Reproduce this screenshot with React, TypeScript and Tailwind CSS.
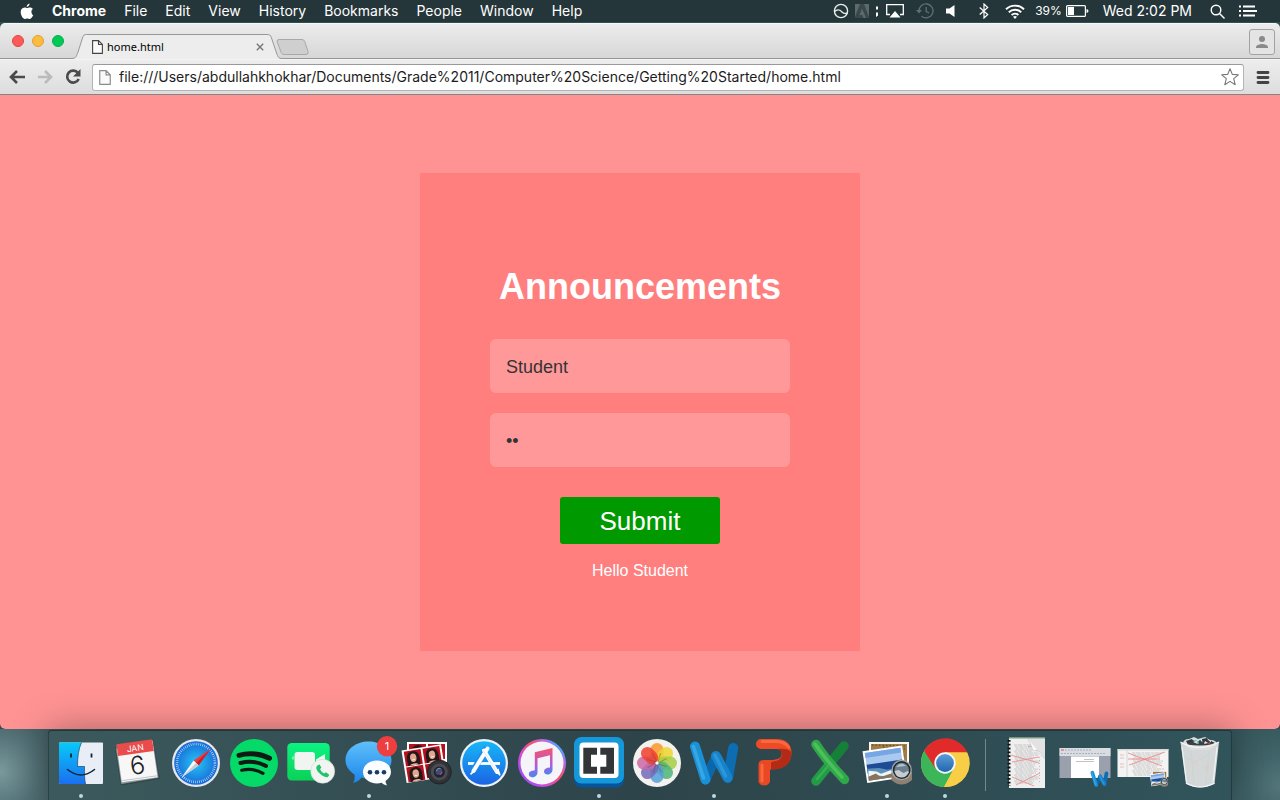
import React from "react";

const MENU_ITEMS = ["File", "Edit", "View", "History", "Bookmarks", "People", "Window", "Help"];

/* ---------- Menu bar ---------- */

function AppleLogo() {
  return (
    <svg viewBox="0 0 14 17" className="h-[17px] w-[14px]" fill="#fff">
      <path d="M9.6 0.6C9.7 2.3 8.3 4 6.7 4 6.5 2.4 8 0.8 9.6 0.6ZM11.4 8.7C11.4 7 12.6 6.2 12.9 6 12 4.700 10.700 4.400 10.100 4.400 8.900 4.300 7.800 5.100 7.200 5.100 6.600 5.100 5.700 4.400 4.600 4.400 2.300 4.500.700 6.300.700 9 .7 12.200 3 16 4.800 16 5.700 16 6.100 15.400 7.200 15.400 8.300 15.400 8.600 16 9.600 16 11.300 16 12.900 13.200 13.200 12.100 12.900 12 11.400 11.200 11.400 8.700Z" />
    </svg>
  );
}

function StatusIcons() {
  return (
    <>
      <svg viewBox="0 0 16 16" className="h-4 w-4" fill="none" stroke="#e9eeee" strokeWidth="1.4">
        <circle cx="8" cy="8" r="6.600" />
        <path d="M1.500 8.500C5 5.500 7 7 9 9s4 1.500 5.500.8" />
      </svg>
      <svg viewBox="0 0 14 14" className="ml-1.5 h-3.5 w-3.5">
        <path d="M0 0h5L0 13zM14 0H9l5 13zM7 4.500l4 9.500H8.500L7.300 11H4.500z" fill="#5c6a6d" />
        <path d="M0 0h14v14H0z" fill="#5c6a6d" opacity=".35" />
      </svg>
      <svg viewBox="0 0 3 12" className="ml-1.5 h-3 w-[3px]" fill="#fff">
        <path d="M1 1.500h2v3H1zM1 7.500h2v3L1 12z" />
      </svg>
      <svg viewBox="0 0 18 14" className="ml-2 h-3.5 w-[18px]">
        <path d="M4 10.500H.7V.7h16.600v9.800H14" fill="none" stroke="#fff" strokeWidth="1.3" />
        <path d="M9 7l5.500 6.500h-11z" fill="#fff" />
      </svg>
      <svg viewBox="0 0 18 16" className="ml-3 h-4 w-[18px]" fill="none" stroke="#5f7073" strokeWidth="1.300">
        <path d="M3 8a7 7 0 1 1 2.500 5.200M10.200 4v4.500l3 1.500" />
        <path d="M0 7h6L3 10.500z" fill="#5f7073" stroke="none" />
      </svg>
      <svg viewBox="0 0 9 12" className="ml-3 h-3 w-[9px]" fill="#fff">
        <path d="M0 3.500h3.500L8.500 0v12L3.500 8.500H0z" />
      </svg>
      <svg viewBox="0 0 10 16" className="ml-6 h-4 w-2.5" fill="none" stroke="#fff" strokeWidth="1.200">
        <path d="M.7 4.500l8 7L5 15V1l3.700 3.500-8 7" />
      </svg>
      <svg viewBox="0 0 20 15" className="ml-4 h-[15px] w-5" fill="none" stroke="#fff" strokeWidth="1.900">
        <path d="M1 5.200a13 13 0 0 1 18 0M3.800 8.200a9 9 0 0 1 12.400 0M6.600 11a5 5 0 0 1 6.800 0" />
        <path d="M10 15l-2-2.200a3 3 0 0 1 4 0z" fill="#fff" stroke="none" />
      </svg>
      <span className="ml-2.5 text-[12px] leading-4">39%</span>
      <svg viewBox="0 0 23 12" className="ml-1 h-3 w-[23px]">
        <rect x=".6" y=".6" width="18.800" height="10.800" rx="1" fill="none" stroke="#fff" strokeWidth="1.200" />
        <path d="M2 2h6v8H2z" fill="#fff" />
        <path d="M20.500 4q2 .3 2 2t-2 2z" fill="#fff" />
      </svg>
      <span className="ml-3.5 text-[14px] leading-4">Wed 2:02 PM</span>
      <svg viewBox="0 0 15 15" className="ml-[18px] h-[15px] w-[15px]" fill="none" stroke="#fff" strokeWidth="1.400">
        <circle cx="6" cy="6" r="4.800" />
        <path d="M9.500 9.500l5 5" />
      </svg>
      <svg viewBox="0 0 18 12" className="ml-3.5 h-3 w-[18px]" fill="#fff">
        <path d="M0 .5h2v2H0zM0 5h2v2H0zM0 9.500h2v2H0zM4 .5h12v2H4zM4 5h14v2H4zM4 9.500h12v2H4z" />
      </svg>
    </>
  );
}

function MenuBar() {
  return (
    <header className="flex h-[23px] items-center justify-between border-b border-[#2f5153] bg-[#25363a] pr-[23px] pl-5 text-[14px] leading-4 text-white">
      <nav className="flex items-center gap-[18px]">
        <a href="#apple" aria-label="Apple" className="block">
          <AppleLogo />
        </a>
        <a href="#chrome" className="font-bold">Chrome</a>
        {MENU_ITEMS.map((item) => (
          <a key={item} href={"#" + item.toLowerCase()}>{item}</a>
        ))}
      </nav>
      <div className="flex items-center">
        <StatusIcons />
      </div>
    </header>
  );
}

/* ---------- Browser ---------- */

function PageIcon({ stroke, className }: { stroke: string; className: string }) {
  return (
    <svg viewBox="0 0 11 14" className={className} fill="#fafafa" stroke={stroke} strokeWidth="1.100">
      <path d="M.6.6h5.900l3.900 3.900v8.900H.6zM6.500.6v3.900h3.900" />
    </svg>
  );
}

function TabStrip() {
  return (
    <div className="flex h-9 items-end border-t border-b border-t-[#f7f7f7] border-b-[#979797] bg-linear-to-b from-[#ececec] to-[#d7d7d7]">
      <div className="flex gap-2 self-center pl-3">
        <button aria-label="Close window" className="h-3 w-3 rounded-full border border-[#e2463f] bg-[#fc5b57]" />
        <button aria-label="Minimize window" className="h-3 w-3 rounded-full border border-[#e0a032] bg-[#fdbc40]" />
        <button aria-label="Zoom window" className="h-3 w-3 rounded-full border border-[#05b048] bg-[#00ca56]" />
      </div>
      <div className="relative -mb-px ml-2 flex h-[25px] w-[210px] items-center pr-[18px] pl-5">
        <svg viewBox="0 0 210 25" className="absolute inset-0 h-full w-full">
          <path d="M0 25V24.500C4 24.500 4.500 22 6 18L10.500 4C11.500 1 12 .5 14.500 .5H195C197.500 .5 198.500 1 199.500 4L204.500 19C206 23 206.500 24.500 210 24.500V25Z" fill="#ededed" />
          <path d="M0 24.500C4 24.500 4.500 22 6 18L10.500 4C11.500 1 12 .5 14.500 .5H195C197.500 .5 198.500 1 199.500 4L204.500 19C206 23 206.500 24.500 210 24.500" fill="none" stroke="#979797" />
        </svg>
        <PageIcon stroke="#444" className="relative h-3.5 w-[11px]" />
        <span className="relative ml-1 flex-1 font-['Noto_Sans',sans-serif] text-[11px] leading-4 text-black">home.html</span>
        <button aria-label="Close tab" className="relative">
          <svg viewBox="0 0 8 8" className="h-2 w-2" stroke="#777" strokeWidth="1.400">
            <path d="M.8.8l6.400 6.400M7.200.8L.8 7.200" />
          </svg>
        </button>
      </div>
      <button aria-label="New tab" className="mb-[3px] -ml-1.5">
        <svg viewBox="0 0 33 16" className="h-4 w-[33px]" fill="#cfcfcf" stroke="#a8a8a8">
          <path d="M3 .5H26Q28 .5 28.700 2.500L32 12.500Q33 15.500 30 15.500H8Q6 15.500 5.200 13.500L1.200 3Q.5.500 3 .5Z" />
        </svg>
      </button>
      <button aria-label="Profile" className="mr-[5px] ml-auto mb-[3px] flex h-[26px] w-[26px] items-center justify-center rounded-[3px] border border-[#a2a2a2] bg-[#e4e4e4]">
        <svg viewBox="0 0 12 12" className="h-3 w-3" fill="#8a8a8a">
          <circle cx="6" cy="3" r="3" />
          <path d="M0 12V10.500C1.500 7 10.500 7 12 10.500V12Z" />
        </svg>
      </button>
    </div>
  );
}

function Toolbar() {
  return (
    <div className="flex h-9 items-center border-t border-b border-t-[#f4f4f4] border-b-[#858585] bg-linear-to-b from-[#ededed] to-[#dddddd] pr-[10px] pl-[9px]">
      <button aria-label="Back">
        <svg viewBox="0 0 16 14" className="h-3.5 w-4" fill="none" stroke="#4a4a4a" strokeWidth="2.600">
          <path d="M8 1L2 7l6 6M2 7h14" />
        </svg>
      </button>
      <button aria-label="Forward" className="ml-3">
        <svg viewBox="0 0 16 14" className="h-3.5 w-4" fill="none" stroke="#bababa" strokeWidth="2.600">
          <path d="M8 1l6 6-6 6M14 7H1" />
        </svg>
      </button>
      <button aria-label="Reload" className="ml-3">
        <svg viewBox="0 0 16 16" className="h-4 w-4">
          <path d="M13 4A6 6 0 1 0 13.700 10" fill="none" stroke="#4a4a4a" strokeWidth="2.600" />
          <path d="M15.500 0v7.500H8z" fill="#4a4a4a" />
        </svg>
      </button>
      <div className="ml-[11px] flex h-[27px] flex-1 items-center rounded-[3px] border border-[#b5b5b5] border-t-[#999] bg-white pr-1 pl-1.5">
        <PageIcon stroke="#8c8c8c" className="h-[15px] w-3" />
        <input
          aria-label="Address"
          defaultValue="file:///Users/abdullahkhokhar/Documents/Grade%2011/Computer%20Science/Getting%20Started/home.html"
          className="ml-2 min-w-0 flex-1 bg-transparent text-[14px] leading-5 text-[#1c1c1c] outline-none"
        />
        <button aria-label="Bookmark this page">
          <svg viewBox="0 0 18 18" className="h-[18px] w-[18px]" fill="#fff" stroke="#777" strokeWidth="1.100" strokeLinejoin="round">
            <path d="M9 .8l2.300 5.600 6 .4-4.600 3.900 1.500 6L9 13.400l-5.200 3.300 1.500-6L.7 6.800l6-.4z" />
          </svg>
        </button>
      </div>
      <button aria-label="Menu" className="ml-3">
        <svg viewBox="0 0 14 13" className="h-[13px] w-3.5" stroke="#444" strokeWidth="2.800" strokeLinecap="round">
          <path d="M2 1.500h10M2 6.500h10M2 11.500h10" />
        </svg>
      </button>
    </div>
  );
}

function LoginPage() {
  const field =
    "block h-[54px] w-full rounded-md bg-[#ff9999] px-4 pt-0.5 text-[18px] text-[#333] outline-none";
  return (
    <main className="flex flex-1 items-center justify-center rounded-b-[5px] bg-[#ff9393] font-['Liberation_Sans',Arial,sans-serif]">
      <form
        onSubmit={(e) => e.preventDefault()}
        className="flex w-[440px] max-w-full flex-col items-center bg-[#ff7f7f] px-[70px] pt-[92px] pb-[70px] text-white"
      >
        <h1 className="text-[36px] leading-[44px] font-bold">Announcements</h1>
        <div className="mt-[30px] flex w-full flex-col gap-5">
          <input aria-label="Username" type="text" defaultValue="Student" className={field} />
          <input aria-label="Password" type="password" defaultValue="hi" className={field} />
        </div>
        <button type="submit" className="mt-[30px] h-[47px] w-40 rounded-[3px] bg-[#009900] text-[26px] leading-8">
          Submit
        </button>
        <p className="mt-[17px] text-[16px] leading-5">Hello Student</p>
      </form>
    </main>
  );
}

/* ---------- Dock icons, each drawn on a 56 x 56 grid ---------- */

function Finder() {
  return (
    <>
      <rect x="6" y="7.500" width="44" height="41.500" rx="1" fill="#e9eef6" />
      <path d="M28.500 7.500H7a1 1 0 0 0-1 1V48a1 1 0 0 0 1 1h25.500c-1-5-1.200-10-1-17.500H24.500C24.500 22 25.500 14 28.500 7.500Z" fill="url(#finder)" />
      <path d="M28.500 7.500C25.500 14 24.500 22 24.500 31.500h7c-.2 7.500 0 12.500 1 17.500" fill="none" stroke="#17466f" strokeWidth=".7" />
      <path d="M18 18.500v4M38.500 18.500v4" stroke="#10243a" strokeWidth="1.800" />
      <path d="M14.500 34.500Q28 45.500 41.500 34.500" fill="none" stroke="#10243a" strokeWidth="1.600" strokeLinecap="round" />
    </>
  );
}

function Calendar() {
  return (
    <>
      <path d="M5 12.500L42 4L50 44L11 50.500Z" fill="#39474a" />
      <path d="M5.500 13L43 5L49 43L11 49.500Z" fill="#8c9da1" stroke="#26383b" strokeWidth=".6" />
      <g transform="rotate(-8 27 26)">
        <rect x="9" y="8" width="36" height="37" fill="#f7f7f7" />
        <rect x="9" y="6.500" width="36" height="12" fill="#ea4c4b" />
        <path d="M9 43.500h36" stroke="#c5c5c5" />
        <text x="27" y="16" textAnchor="middle" fontSize="8.500" fill="#fff">JAN</text>
        <text x="27" y="39" textAnchor="middle" fontSize="25" fontWeight="300" fill="#222">6</text>
      </g>
    </>
  );
}

function Safari() {
  return (
    <>
      <circle cx="28" cy="28" r="24" fill="#e6e9ec" />
      <circle cx="28" cy="28" r="21.800" fill="url(#safari)" />
      <circle cx="28" cy="28" r="19" fill="none" stroke="#d5ecfb" strokeWidth="2.600" strokeDasharray=".6 1.390" />
      <path d="M42.500 14L30.600 30.500L25.600 25.500Z" fill="#f5383b" />
      <path d="M42.500 14L30.600 30.500L28 28Z" fill="#c91f2a" />
      <path d="M13.500 42.500L25.600 25.500L30.600 30.500Z" fill="#fafafa" />
      <path d="M13.500 42.500L28 28L30.600 30.500Z" fill="#c6ccd1" />
    </>
  );
}

function Spotify() {
  return (
    <>
      <circle cx="28" cy="28" r="24" fill="#05d968" />
      <g fill="none" stroke="#0d1b14" strokeLinecap="round">
        <path d="M13 20.300C23 17.500 35 18.500 43.500 23.300" strokeWidth="5" />
        <path d="M14.500 28C23 25.800 32.500 27 40 31" strokeWidth="4" />
        <path d="M15.700 35.200C22 33.800 30.500 34.500 37 38.300" strokeWidth="3.200" />
      </g>
    </>
  );
}

function FaceTime() {
  return (
    <>
      <rect x="4.300" y="8" width="42.400" height="37.500" rx="4.500" fill="url(#green)" />
      <rect x="11.500" y="17" width="20.500" height="18" rx="3" fill="#f1f5f2" />
      <path d="M33 24.500l9-5.500v12l-9-3z" fill="#f1f5f2" />
      <path d="M10 21.500v3" stroke="#f1f5f2" />
      <circle cx="39.700" cy="36.300" r="12" fill="#f2f4f2" stroke="#c9d3cc" strokeWidth=".5" />
      <path d="M34.500 30.500c-2 1.200-1.400 4.200 1.500 7.300s6.800 5.200 8.800 4.200l1.600-2-3.400-2.800-2 1.200c-2-1-3.400-2.500-3.900-4.300l1.300-1.600-2.100-3.300z" fill="#1ec36a" />
    </>
  );
}

function Messages() {
  return (
    <>
      <path d="M27.500 6.500C40 6.500 50.500 14.500 50.500 25S40 43.500 27.500 43.500c-2.500 0-5-.3-7-1-2.500 3.500-5 4.800-8.500 5.500 1.500-2.500 2-5 1.500-8.500C8 36 4.500 31 4.500 25 4.500 14.500 15 6.500 27.500 6.500Z" fill="url(#blue)" />
      <path d="M36 25.500c8 0 14 5 14 11.500 0 4-2.500 7-5.500 9 .2 1.800.7 3 1.700 4.500-2.500-.3-4.200-1.300-5.500-2.700-1.500.5-3 .6-4.700.6-8 0-14-5-14-11.400S28 25.500 36 25.500Z" fill="#fbfdff" />
      <g fill="#153c6c">
        <circle cx="29" cy="37.300" r="2.300" /><circle cx="36" cy="37.300" r="2.300" /><circle cx="43" cy="37.300" r="2.300" />
      </g>
      <circle cx="46" cy="11.300" r="10.200" fill="#ee3e40" />
      <text x="46" y="15.300" textAnchor="middle" fontSize="11" fill="#fff">1</text>
    </>
  );
}

function Portrait({ x, y }: { x: number; y: number }) {
  return (
    <g transform={`translate(${x} ${y})`}>
      <path d="M0 0h17v15H0z" fill="#b5121f" />
      <path d="M2.500 15C1 5 3 1 8.500 1S16 5 14.500 15Z" fill="#241619" />
      <ellipse cx="8.500" cy="7.500" rx="3.200" ry="4.200" fill="#e0a88c" />
      <path d="M4 15c1-2.500 8-2.500 9 0z" fill="#e7b39b" />
      <path d="M7 9.500h3" stroke="#fff" strokeWidth=".8" />
    </g>
  );
}

function PhotoBooth() {
  return (
    <>
      <path d="M9 7h40v20H9z" fill="#fff" />
      <path d="M11 9h17v15H11zM30 9h17v15H30z" fill="#b5121f" />
      <path d="M14 13q6-6 12 0zM33 14q6-6 12 0z" fill="#241619" />
      <g transform="translate(3.500 15.500) rotate(-9)">
        <path d="M0 0h40v33H0z" fill="#fff" />
        <Portrait x={2} y={1.500} />
        <Portrait x={21} y={1.500} />
        <Portrait x={2} y={17.500} />
        <path d="M21 17.500h17v14H21z" fill="#b5121f" />
      </g>
      <circle cx="41.300" cy="37" r="12" fill="#303235" stroke="#17191b" strokeWidth=".7" />
      <circle cx="41.300" cy="37" r="8.500" fill="#4a4c50" />
      <circle cx="41.300" cy="37" r="5.500" fill="#1b2430" />
      <circle cx="41" cy="36.500" r="3.500" fill="#4b4673" />
      <path d="M38.500 36a3 3 0 0 1 4-2.500" stroke="#58b3a4" fill="none" />
      <path d="M42 39.500a3 3 0 0 0 2-2.500" stroke="#cf4b85" fill="none" />
    </>
  );
}

function AppStore() {
  return (
    <>
      <circle cx="28" cy="28" r="24" fill="#eef2f5" />
      <circle cx="28" cy="28" r="21.800" fill="url(#store)" />
      <path d="M12 28.500h32" stroke="#fff" strokeWidth="2.800" />
      <path d="M30.500 12.500L17 36" stroke="#1b8fe9" strokeWidth="6" />
      <g stroke="#fff" strokeWidth="4" strokeLinecap="round">
        <path d="M31.500 13.500L17.500 36" />
        <path d="M28 15.500L41 37" />
      </g>
      <path d="M14 38.500l4-3.500 1.500 1L15 40zM38.500 36l4-2.500 2 6-.5 1.500z" fill="#fff" />
      <path d="M27 15l13 21" stroke="#bcdcf7" strokeWidth=".6" />
    </>
  );
}

function ITunes() {
  return (
    <>
      <circle cx="28" cy="28" r="24" fill="url(#tunesRing)" />
      <circle cx="28" cy="28" r="21.500" fill="#f5f4f8" />
      <path d="M20.800 17.300L38.500 13v21.500c0 6-8.500 6.500-8.500 2 0-2.500 2.200-3.800 6-4V20.300l-12.500 2.900v14c0 6-8.700 6.600-8.700 2 0-2.500 2-3.700 6-4z" fill="url(#tunesNote)" />
    </>
  );
}

function Brackets() {
  return (
    <>
      <rect x="3" y="5" width="50" height="47.500" rx="7.500" fill="#06549a" />
      <rect x="3" y="2" width="50" height="46.500" rx="7.500" fill="#1598d9" />
      <rect x="8.500" y="7.500" width="39" height="35.500" rx="4" fill="#fff" />
      <path d="M12.300 12.700h13.700v7h-6v12h6v7H12.300zM43 12.700H29.300v7h6v12h-6v7H43z" fill="#333638" />
    </>
  );
}

const PETALS = ["#f9982a", "#ecd62f", "#a3cf45", "#4cb679", "#549fd8", "#7569b9", "#cb69a6", "#ee402f"];

function Photos() {
  return (
    <>
      <circle cx="28" cy="28" r="24" fill="#f4f2ef" />
      {PETALS.map((color, i) => (
        <rect key={color} x="21.500" y="8" width="13" height="19" rx="6.500" fill={color} opacity=".85" transform={`rotate(${i * 45} 28 28)`} />
      ))}
      <g stroke="#7a3b4c" strokeWidth="1.200" opacity=".4">
        {PETALS.map((color, i) => (
          <path key={color} d="M28 26.500l-4.500-8" transform={`rotate(${i * 45} 28 28)`} />
        ))}
      </g>
      <circle cx="28" cy="28" r="1.600" fill="#fff" />
    </>
  );
}

function WordMark() {
  return (
    <g fill="none" strokeLinecap="round" strokeLinejoin="round" strokeWidth="10">
      <path d="M47.200 13L42 43" stroke="#0d6db3" />
      <path d="M19.500 44.500L30 22" stroke="#0b66aa" />
      <path d="M30 21L41.500 42.500" stroke="#1683cb" />
      <path d="M9 11.500L19.500 44.500" stroke="#1a90d6" />
      <path d="M7.500 11.500L17.500 43" stroke="#36a6e4" strokeWidth="3.500" />
      <path d="M29 20L39.500 41" stroke="#2b97da" strokeWidth="3.500" />
    </g>
  );
}

function PowerPoint() {
  return (
    <>
      <path d="M17 4H32C43 4 47.500 10 47.500 17.500C47.500 27 42 34.500 26 34.500V25C35 25 37.500 23 37.500 18C37.500 15 35.500 14 32 14H17A5 5 0 0 1 17 4Z" fill="#ee4a27" />
      <path d="M47.500 17C47.500 28 42 34.500 27 34.500V27C35 26 38.500 24 37.500 18C37 15.500 35 14 33 14C40 13 45 14 47.500 17Z" fill="#b32a16" />
      <path d="M18 6.500H32C38 6.500 42 8.500 44.500 12" stroke="#f9693f" strokeWidth="3" fill="none" strokeLinecap="round" />
      <path d="M19.500 25H30Q26 27 26 32V46.500A6 5.500 0 0 1 14.500 46.500V30Q14.500 25 19.500 25Z" fill="#ea4724" />
      <path d="M18 30V46" stroke="#f9693f" strokeWidth="3" strokeLinecap="round" />
    </>
  );
}

function Excel() {
  return (
    <g fill="none" strokeLinecap="round">
      <path d="M42 11L29 27" stroke="#168039" strokeWidth="9.500" />
      <path d="M27 30L14 46" stroke="#219b45" strokeWidth="9.500" />
      <path d="M14 9.500Q24 25 42.500 44.500" stroke="#2fa848" strokeWidth="9.500" />
      <path d="M13 9Q24 25 40 42" stroke="#4dbf5d" strokeWidth="3.500" />
      <path d="M26 31L15 44" stroke="#37b04f" strokeWidth="2.500" />
    </g>
  );
}

function PreviewArt() {
  return (
    <>
      <path d="M10 7h40v30H10z" fill="#fbf8ef" />
      <path d="M12 9h36v26H12z" fill="#a17c47" />
      <path d="M13 10l33 1M24 12l22 2M34 18l12 3" stroke="#5e4524" strokeDasharray="1.500 2" />
      <g transform="translate(3.500 16.300) rotate(-8.500)">
        <path d="M0 0h40v32H0z" fill="#fff" />
        <path d="M2 2h36v28H2z" fill="#a9c9ef" />
        <path d="M2 2h36v5H2z" fill="#77a6e4" />
        <path d="M2 14h36v9H2z" fill="#1e4b93" />
        <path d="M2 18l12 1 8 3 16-1v9H2z" fill="#5d91ba" />
        <path d="M3 20l8 2 4 3 10-2 3 4-9 1-8-2-9 2z" fill="#eef5f8" />
        <path d="M2 26l8-2 4 4 12-2 12 1v3H2z" fill="#8a7358" />
      </g>
      <path d="M32.500 37v8q10 9 20.500 0v-8z" fill="#8e8173" />
      <circle cx="42.700" cy="35" r="10.200" fill="#a9a8a2" />
      <circle cx="42.700" cy="35" r="8.900" fill="#1f2b32" />
      <circle cx="42.700" cy="35" r="7.300" fill="#6c7f8c" />
      <path d="M35.500 36l4-1 5 3 4-2 1.500 1q-3 6-8 5.500-5 0-6.500-6.500z" fill="#c6cccf" />
      <path d="M37 32q5-6 10-1z" fill="#aec4d3" />
    </>
  );
}

function Chrome() {
  return (
    <>
      <circle cx="28" cy="28" r="24" fill="#f8ce46" />
      <path d="M28 28L7.200 16A24 24 0 0 0 27 52L38 33.500Z" fill="#3db65a" />
      <path d="M7.200 16A24 24 0 0 1 50.300 17.500H28L18.500 33.500Z" fill="#e12b2b" />
      <path d="M50.300 17.500H28L37 33L27 52A24 24 0 0 0 50.300 17.500Z" fill="#f8ce46" />
      <circle cx="28" cy="28" r="10.700" fill="#f5f7f8" />
      <circle cx="28" cy="28" r="8.900" fill="url(#chromeDot)" />
    </>
  );
}

function TextLines({ x, y, width, rows }: { x: number; y: number; width: number; rows: number }) {
  return (
    <g stroke="#b4b4b4" strokeWidth=".7" strokeDasharray="3 .6 5 .8">
      {Array.from({ length: rows }, (_, i) => (
        <path key={i} d={`M${x + (i % 3)} ${y + i * 2}h${width - (i % 4) * 2}`} />
      ))}
    </g>
  );
}

function NotebookDoc() {
  return (
    <>
      <path d="M11 2h36v51H11z" fill="#efefef" />
      <path d="M11 2.700h36" stroke="#75937d" strokeWidth="1.400" />
      <TextLines x={16} y={10} width={24} rows={20} />
      <path d="M41.500 10v38" stroke="#aaa" strokeWidth=".7" strokeDasharray="1 2" />
      <path d="M13 20l28 8M14 27l27-5M14 42l22 9M18 50l24-12M30 12l12-4" stroke="#ee8585" strokeWidth=".8" />
      <path d="M30 4q4 12 17 20V4z" fill="#e2e2e2" />
      <path d="M30 4q4 7 5 12 6-4 12 8" fill="#fafafa" stroke="#bdbdbd" strokeWidth=".5" />
      <path d="M11 5v46" stroke="#111" strokeWidth="3" strokeDasharray="1.800 2" />
    </>
  );
}

function WordWindow() {
  return (
    <>
      <path d="M3.500 13h51v30h-51z" fill="#9aa0ad" />
      <path d="M3.500 13h51v8h-51z" fill="#d9dce1" />
      <path d="M9 15h26M5 18.500h44" stroke="#9aa6b8" strokeWidth=".8" strokeDasharray="2 1" />
      <path d="M5 15h3" stroke="#d95b55" />
      <path d="M15 21.500h28V43H15z" fill="#fff" />
      <path d="M20 26.500h18M28 24.500h10" stroke="#999" strokeWidth=".6" />
      <g transform="translate(33 33.500) scale(.37)"><WordMark /></g>
    </>
  );
}

function PreviewWindow() {
  return (
    <>
      <path d="M3.500 14h51v28h-51z" fill="#f3f3f3" />
      <path d="M3.500 14h51v1.500h-51z" fill="#d8d8d8" />
      <path d="M13 15v27" stroke="#d5d5d5" />
      <path d="M6 20h4M6 23h4M6 29h4M6 32h4" stroke="#e3b0b0" strokeWidth=".8" />
      <TextLines x={18} y={18} width={30} rows={12} />
      <path d="M14 18l34 13M15 30l36-13M14 24h32" stroke="#ee8080" strokeWidth=".8" />
      <g transform="translate(34.500 33.500) scale(.37)"><PreviewArt /></g>
    </>
  );
}

function Trash() {
  return (
    <>
      <path d="M12 9q0-5 6-5l5-2 4 2 7-2 5 3q7 0 7 5l-8 5H20z" fill="#d8dddb" />
      <path d="M15 6l6-2 3 5-6 2zM31 4l5-1 3 6-7 1zM25 9l4-4 3 5zM40 6l4 2-4 3z" fill="#30383c" />
      <path d="M23 5l4 1-2 3z" fill="#3fb681" /><path d="M33 7l4 1-3 2z" fill="#c8463f" /><path d="M29 8l3-2v4z" fill="#396dbd" />
      <path d="M9.500 7Q28 14 48 7L43.500 49Q29 56 15 49Z" fill="#dcdede" opacity=".95" />
      <path d="M16 9l6-4 4 4 3-4 4 4 4-4 5 4q-14 3-26 0z" fill="#3a4144" />
      <path d="M22 7l4-1 1 3zM34 6l3 2-4 1z" fill="#e6e6e6" />
      <path d="M25 8l3-1v2z" fill="#3fb6a1" /><path d="M36 9l3-2v2z" fill="#c8463f" />
      <path d="M9.500 7Q28 18 48 7" fill="none" stroke="#f5f5f5" strokeWidth="1.200" />
      <path d="M15 48Q29 56 43.500 48" fill="none" stroke="#f8f8f8" strokeWidth="1.200" />
      <path d="M20 16l3 32M38 16l-3 32M14 22l10 5 14-8" stroke="#c8cccc" strokeWidth=".8" fill="none" opacity=".6" />
      <path d="M20 28l5-3 3 6zM32 32l7-3-2 8z" fill="#e7c7c1" opacity=".4" />
      <path d="M11 12l4.500 35M46 12l-4 35" stroke="#fff" strokeWidth="1.200" opacity=".7" />
    </>
  );
}

const APPS = [
  { name: "Finder", Art: Finder, open: true },
  { name: "Calendar", Art: Calendar, open: false },
  { name: "Safari", Art: Safari, open: false },
  { name: "Spotify", Art: Spotify, open: false },
  { name: "FaceTime", Art: FaceTime, open: false },
  { name: "Messages", Art: Messages, open: true },
  { name: "Photo Booth", Art: PhotoBooth, open: false },
  { name: "App Store", Art: AppStore, open: false },
  { name: "iTunes", Art: ITunes, open: false },
  { name: "Brackets", Art: Brackets, open: true },
  { name: "Photos", Art: Photos, open: false },
  { name: "Word", Art: WordMark, open: true },
  { name: "PowerPoint", Art: PowerPoint, open: false },
  { name: "Excel", Art: Excel, open: false },
  { name: "Preview", Art: PreviewArt, open: true },
  { name: "Chrome", Art: Chrome, open: true },
];

const SHELF = [
  { name: "Document", Art: NotebookDoc, open: false },
  { name: "Word window", Art: WordWindow, open: false },
  { name: "Preview window", Art: PreviewWindow, open: false },
  { name: "Trash", Art: Trash, open: false },
];

function DockItem({ name, Art, open }: { name: string; Art: () => React.ReactElement; open: boolean }) {
  return (
    <button aria-label={name} className="flex min-w-0 flex-1 flex-col items-center pt-[5px]">
      <svg viewBox="0 0 56 56" className="h-14 w-14 shrink-0 overflow-visible">
        <Art />
      </svg>
      {open && <span className="mt-[3px] h-1 w-1 rounded-full bg-[#b8dbdf]" />}
    </button>
  );
}

function Gradients() {
  return (
    <svg className="absolute h-0 w-0" aria-hidden="true">
      <defs>
        <linearGradient id="finder" x2="0" y2="1"><stop stopColor="#08c9f7" /><stop offset="1" stopColor="#1a6ff0" /></linearGradient>
        <radialGradient id="safari"><stop stopColor="#25c8f5" /><stop offset="1" stopColor="#1869d8" /></radialGradient>
        <linearGradient id="green" x2="0" y2="1"><stop stopColor="#0bf382" /><stop offset="1" stopColor="#0bd157" /></linearGradient>
        <linearGradient id="blue" x2="0" y2="1"><stop stopColor="#5fc0fb" /><stop offset="1" stopColor="#1b85ea" /></linearGradient>
        <linearGradient id="store" x2="0" y2="1"><stop stopColor="#17b7f8" /><stop offset="1" stopColor="#1b64e4" /></linearGradient>
        <linearGradient id="tunesRing" x1=".15" y1=".9" x2=".95" y2=".2"><stop stopColor="#9b4df5" /><stop offset=".3" stopColor="#d94bd8" /><stop offset=".6" stopColor="#f5506f" /><stop offset=".85" stopColor="#b36cf0" /><stop offset="1" stopColor="#24bdf7" /></linearGradient>
        <linearGradient id="tunesNote" x1=".5" x2=".6" y2="1"><stop stopColor="#fb5363" /><stop offset=".55" stopColor="#b758d8" /><stop offset="1" stopColor="#3c8df0" /></linearGradient>
        <linearGradient id="chromeDot" x2="0" y2="1"><stop stopColor="#5b9bd8" /><stop offset="1" stopColor="#2167ad" /></linearGradient>
      </defs>
    </svg>
  );
}

function Dock() {
  return (
    <footer className="bg-[radial-gradient(circle_at_0_60%,#7a999c_0,#557378_36px,#3c575c_70px,transparent_120px),radial-gradient(circle_at_100%_80%,#54767a_0,#406469_30px,transparent_90px)] pt-px">
      <div className="relative mx-auto flex h-[70px] w-[92.5%] rounded-t-[4px] bg-linear-to-r from-[#3c5a5d] via-[#2d444a] to-[#31545b] px-1 shadow-[0_0_36px_rgba(0,0,0,0.35),inset_0_1px_0_#22363a,inset_1px_0_0_#2a4145,inset_-1px_0_0_#22393e]">
        <Gradients />
        <div className="flex flex-[16]">
          {APPS.map((app) => <DockItem key={app.name} {...app} />)}
        </div>
        <div className="flex w-6 justify-center pt-[9px]">
          <span className="h-[52px] w-px bg-[#6d8a8f]" />
        </div>
        <div className="flex flex-[4]">
          {SHELF.map((item) => <DockItem key={item.name} {...item} />)}
        </div>
      </div>
    </footer>
  );
}

export default function App() {
  return (
    <div className="flex min-h-screen flex-col overflow-hidden bg-[#2f4f54] font-['Inter',sans-serif]">
      <MenuBar />
      <section className="flex flex-1 flex-col overflow-hidden rounded-t-[5px] rounded-b-[5px]">
        <TabStrip />
        <Toolbar />
        <LoginPage />
      </section>
      <Dock />
    </div>
  );
}
